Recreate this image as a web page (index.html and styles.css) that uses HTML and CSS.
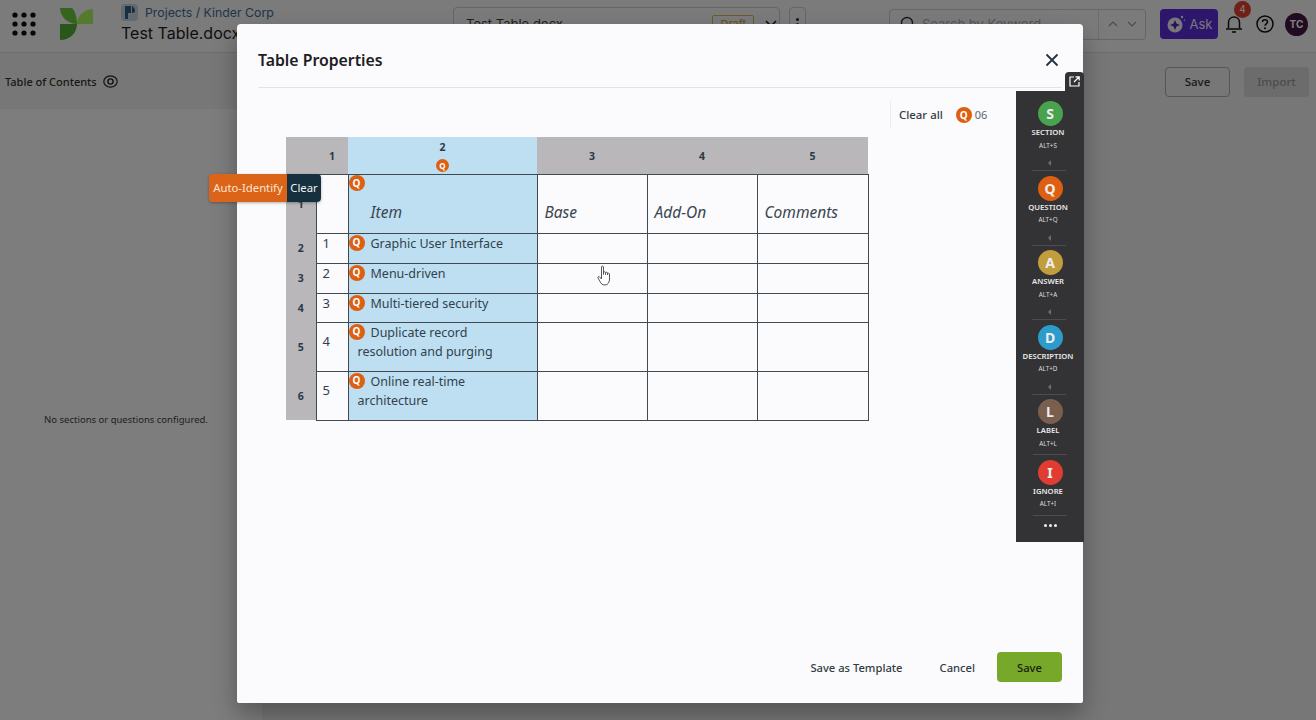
FILE: index.html
```html
<!DOCTYPE html>
<html lang="en">
<head>
<meta charset="utf-8">
<title>Table Properties</title>
<link rel="stylesheet" href="styles.css">
</head>
<body>
<div class="page">
  <header class="topbar">
    <svg class="apps" width="24" height="24" viewBox="0 0 24 24"><g fill="#0c0c0c"><circle cx="3" cy="3" r="2.6"/><circle cx="12" cy="3" r="2.6"/><circle cx="21" cy="3" r="2.6"/><circle cx="3" cy="12" r="2.6"/><circle cx="12" cy="12" r="2.6"/><circle cx="21" cy="12" r="2.6"/><circle cx="3" cy="21" r="2.6"/><circle cx="12" cy="21" r="2.6"/><circle cx="21" cy="21" r="2.6"/></g></svg>
    <svg class="logo" width="33" height="32" viewBox="0 0 33 32"><path d="M0 0H12C15 3 17 9 17 16C8 16 0 9 0 0Z" fill="#6cc83e"/><path d="M33 1V16H17C17 8 24 1 33 1Z" fill="#a8f55c"/><path d="M0 32V16H17C17 25 10 32 0 32Z" fill="#54ac38"/></svg>
    <div class="crumbs">
      <div class="crumb-line">
        <span class="pbadge"><svg width="10" height="13" viewBox="0 0 10 13"><path d="M0 0H6V7H3V13H0ZM7 0C9 1 10 3 10 5C10 6 9 7 7 7Z" fill="#2f5f87"/></svg></span>
        <span class="crumb-text">Projects / Kinder Corp</span>
      </div>
      <div class="doc-title">Test Table.docx</div>
    </div>
    <div class="doc-select">
      <span class="doc-select-name">Test Table.docx</span>
      <span class="draft">Draft</span>
      <svg width="12" height="8" viewBox="0 0 12 8"><path d="M1 1L6 6L11 1" fill="none" stroke="#222" stroke-width="1.6"/></svg>
    </div>
    <div class="kebab"><i></i><i></i><i></i></div>
    <div class="search">
      <svg width="16" height="16" viewBox="0 0 16 16"><circle cx="7" cy="7" r="5.5" fill="none" stroke="#333" stroke-width="1.4"/><path d="M11 11L15 15" stroke="#333" stroke-width="1.4"/></svg>
      <span class="search-text">Search by Keyword</span>
      <span class="search-nav">
        <svg width="10" height="6" viewBox="0 0 10 6"><path d="M1 5L5 1L9 5" fill="none" stroke="#999" stroke-width="1.2"/></svg>
        <svg width="10" height="6" viewBox="0 0 10 6"><path d="M1 1L5 5L9 1" fill="none" stroke="#999" stroke-width="1.2"/></svg>
      </span>
    </div>
    <div class="ask">
      <svg width="20" height="20" viewBox="0 0 20 20"><circle cx="9" cy="11" r="7.5" fill="#f0eef8"/><path d="M9 6L10.5 9.5L14 11L10.5 12.5L9 16L7.5 12.5L4 11L7.5 9.5Z" fill="#4a2bb8"/><circle cx="16" cy="3" r="1.2" fill="#f0eef8"/><circle cx="18.5" cy="6" r=".7" fill="#f0eef8"/></svg>
      <span>Ask</span>
    </div>
    <div class="bell">
      <svg width="18" height="20" viewBox="0 0 18 20"><path d="M3.5 14V8.5C3.5 5 6 3 9 3S14.500 5 14.500 8.500V14M1 15H17M7 18H11" fill="none" stroke="#111" stroke-width="1.500"/></svg>
      <span class="bell-count">4</span>
    </div>
    <svg class="help" width="18" height="18" viewBox="0 0 18 18"><circle cx="9" cy="9" r="8" fill="none" stroke="#111" stroke-width="1.500"/><path d="M6.500 7C6.500 5.500 7.700 4.800 9 4.800S11.500 5.600 11.500 7C11.500 8.800 9 8.800 9 10.800" fill="none" stroke="#111" stroke-width="1.500"/><circle cx="9" cy="13.300" r="1" fill="#111"/></svg>
    <div class="avatar">TC</div>
  </header>
  <div class="subbar">
    <div class="toc">
      <span>Table of Contents</span>
      <svg width="15" height="13" viewBox="0 0 15 13"><ellipse cx="7.500" cy="6.500" rx="6.700" ry="5.700" fill="none" stroke="#262626" stroke-width="1.200"/><circle cx="7.500" cy="6.500" r="2.600" fill="none" stroke="#262626" stroke-width="1.400"/></svg>
    </div>
    <div class="sub-actions">
      <span class="sub-save">Save</span>
      <span class="sub-import">Import</span>
    </div>
  </div>
  <main class="content">
    <aside class="side"><p class="empty">No sections or questions configured.</p></aside>
    <div class="main-pane"></div>
  </main>
</div>

<div class="scrim"></div>

<section class="modal">
  <div class="modal-head">
    <h2 class="modal-title">Table Properties</h2>
    <svg width="14" height="14" viewBox="0 0 14 14"><path d="M1.500 1.500L12.500 12.500M12.500 1.500L1.500 12.500" stroke="#26323c" stroke-width="1.800"/></svg>
  </div>
  <div class="modal-body">
    <div class="counter">
      <span class="clear-all">Clear all</span>
      <span class="q q-16">Q</span>
      <span class="count">06</span>
    </div>
    <table class="grid">
      <colgroup><col class="c0"><col class="c1"><col class="c2"><col class="c3"><col class="c4"><col class="c5"></colgroup>
      <thead>
        <tr class="r-head">
          <th class="hd corner"></th>
          <th class="hd"><span class="lower">1</span></th>
          <th class="hd sel"><span class="hd-num">2</span><span class="q q-13">Q</span></th>
          <th class="hd"><span class="lower">3</span></th>
          <th class="hd"><span class="lower">4</span></th>
          <th class="hd"><span class="lower">5</span></th>
        </tr>
      </thead>
      <tbody>
        <tr class="r1">
          <th class="rn">1</th>
          <td class="cell"></td>
          <td class="cell sel item"><span class="q q-16 cellq">Q</span><em>Item</em></td>
          <td class="cell it"><em>Base</em></td>
          <td class="cell it"><em>Add-On</em></td>
          <td class="cell it"><em>Comments</em></td>
        </tr>
        <tr class="r2">
          <th class="rn">2</th><td class="cell num">1</td>
          <td class="cell sel txt"><span class="q q-16 cellq">Q</span><span class="line1">Graphic User Interface</span></td>
          <td class="cell"></td><td class="cell"></td><td class="cell"></td>
        </tr>
        <tr class="r2">
          <th class="rn">3</th><td class="cell num">2</td>
          <td class="cell sel txt"><span class="q q-16 cellq">Q</span><span class="line1">Menu-driven</span></td>
          <td class="cell"></td><td class="cell"></td><td class="cell"></td>
        </tr>
        <tr class="r2b">
          <th class="rn">4</th><td class="cell num">3</td>
          <td class="cell sel txt"><span class="q q-16 cellq">Q</span><span class="line1">Multi-tiered security</span></td>
          <td class="cell"></td><td class="cell"></td><td class="cell"></td>
        </tr>
        <tr class="r3">
          <th class="rn">5</th><td class="cell num mid">4</td>
          <td class="cell sel txt"><span class="q q-16 cellq">Q</span><span class="line1">Duplicate record</span><br>resolution and purging</td>
          <td class="cell"></td><td class="cell"></td><td class="cell"></td>
        </tr>
        <tr class="r3">
          <th class="rn">6</th><td class="cell num mid">5</td>
          <td class="cell sel txt"><span class="q q-16 cellq">Q</span><span class="line1">Online real-time</span><br>architecture</td>
          <td class="cell"></td><td class="cell"></td><td class="cell"></td>
        </tr>
      </tbody>
    </table>
  </div>
  <div class="modal-foot">
    <span class="foot-link foot-template">Save as Template</span>
    <span class="foot-link foot-cancel">Cancel</span>
    <span class="foot-save">Save</span>
  </div>
</section>

<div class="auto-pop">
  <span class="auto">Auto-Identify</span>
  <span class="pop-clear">Clear</span>
</div>

<svg class="cursor" width="16" height="21" viewBox="0 0 16 21"><path d="M4.500 2C4.500 .8 6.500 .8 6.500 2V9.500V7.500C6.500 6.500 8.500 6.500 8.500 7.500V9.500V8C8.500 7 10.500 7 10.500 8V10V8.800C10.500 8 12.500 8 12.500 9V14C12.500 17 11 20 8 20C5 20 4 18.500 3 16.500L1 13C.5 12 1.500 11 2.500 11.800L4.500 14Z" fill="#fff" stroke="#555" stroke-width="1"/></svg>

<aside class="tools">
  <div class="tool"><span class="dot c-s">S</span><b>SECTION</b><small>ALT+S</small><i class="caret"></i></div>
  <div class="tool"><span class="dot c-q">Q</span><b>QUESTION</b><small>ALT+Q</small><i class="caret"></i></div>
  <div class="tool"><span class="dot c-a">A</span><b>ANSWER</b><small>ALT+A</small><i class="caret"></i></div>
  <div class="tool"><span class="dot c-d">D</span><b>DESCRIPTION</b><small>ALT+D</small><i class="caret"></i></div>
  <div class="tool tool-plain"><span class="dot c-l">L</span><b>LABEL</b><small>ALT+L</small></div>
  <div class="tool tool-plain"><span class="dot c-i">I</span><b>IGNORE</b><small>ALT+I</small></div>
  <div class="more"><i></i><i></i><i></i></div>
  <span class="popout"><svg width="11" height="11" viewBox="0 0 11 11"><path d="M5 1H1V10H10V6M6.500 .8H10.200V4.500M10 1L5 6" fill="none" stroke="#fff" stroke-width="1.200"/></svg></span>
</aside>
</body>
</html>
```
FILE: styles.css
```css
* { box-sizing: border-box; }
html, body { margin: 0; height: 720px; overflow: hidden; }
body { font-family: "Noto Sans", "Open Sans", sans-serif; background: #fff; color: #26323c; }

.page { width: 1316px; height: 720px; display: flex; flex-direction: column; background: #fff; }
.topbar { height: 53px; flex: none; display: flex; align-items: center; border-bottom: 1px solid #dcdcdc; padding: 0 0 4px 12px; background: #f6f6f6; font-family: Inter, sans-serif; }
.apps { flex: none; }
.logo { flex: none; margin: 0 0 0 24px; }
.crumbs { width: 332px; margin-left: 28px; align-self: flex-start; padding-top: 3px; flex: none; }
.crumb-line { display: flex; align-items: center; gap: 7px; height: 18px; }
.pbadge { width: 17px; height: 17px; background: #c5d4e0; border-radius: 4px; display: flex; align-items: center; justify-content: center; }
.crumb-text { font-size: 12.300px; color: #3f6a8f; }
.doc-title { font-size: 16px; line-height: 24px; color: #222; white-space: nowrap; }
.doc-select { width: 327px; height: 35px; border: 1px solid #ccc; border-radius: 4px; display: flex; align-items: center; padding: 0 2px 0 12px; font-size: 13px; color: #444; flex: none; }
.doc-select-name { flex: 1; }
.draft { border: 1px solid #d9b25e; border-radius: 2px; font-size: 11px; color: #c89b3c; padding: 1px 7px; margin-right: 11px; }
.kebab { width: 17px; height: 35px; margin: 0 0 0 9px; border: 1px solid #ccc; border-radius: 4px; display: flex; flex-direction: column; align-items: center; justify-content: center; gap: 2px; flex: none; }
.kebab i { width: 3px; height: 3px; border-radius: 50%; background: #222; }
.search { width: 257px; height: 31px; margin-left: 83px; border: 1px solid #ccc; border-radius: 4px; display: flex; align-items: center; padding-left: 10px; font-size: 13px; color: #aaa; flex: none; }
.search-text { flex: 1; margin-left: 6px; white-space: nowrap; }
.search-nav { width: 47px; height: 100%; border-left: 1px solid #ddd; display: flex; align-items: center; justify-content: center; gap: 9px; }
.ask { width: 58px; height: 30px; margin-left: 14px; background: #5a2ed8; border-radius: 4px; color: #efecfa; font-size: 13px; display: flex; align-items: center; justify-content: center; gap: 4px; flex: none; }
.bell { position: relative; width: 18px; height: 20px; margin-left: 7px; flex: none; }
.bell-count { position: absolute; left: 9px; top: -13px; width: 17px; height: 17px; border-radius: 50%; background: #e0402f; color: #fff; font-size: 10px; line-height: 17px; text-align: center; }
.help { margin-left: 13px; flex: none; }
.avatar { width: 23px; height: 23px; margin-left: 11px; border-radius: 50%; background: #421640; color: #fff; font-size: 10px; font-weight: 700; line-height: 23px; text-align: center; flex: none; }

.subbar { height: 56px; flex: none; display: flex; align-items: center; justify-content: space-between; padding: 1px 7px 0 5px; background: #eeeeee; }
.toc { display: flex; align-items: center; gap: 6px; font-size: 11px; font-weight: 500; color: #333; }
.sub-actions { display: flex; gap: 14px; font-size: 11.500px; font-weight: 500; }
.sub-save { width: 65px; height: 30px; border: 1px solid #aaa; border-radius: 4px; display: flex; align-items: center; justify-content: center; color: #333; }
.sub-import { width: 65px; height: 30px; background: #d8d8d8; border-radius: 4px; display: flex; align-items: center; justify-content: center; color: #999; }

.content { flex: 1; display: flex; }
.side { width: 262px; flex: none; background: #fafafa; display: flex; align-items: center; justify-content: center; padding-right: 10px; }
.empty { margin: 0 0 -9px; font-size: 9.500px; color: #444; }
.main-pane { flex: 1; background: #eeeeee; }

.scrim { position: absolute; inset: 0; background: rgba(0, 0, 0, .5); }

.modal { position: absolute; left: 237px; top: 24px; width: 846px; height: 679px; background: #fbfafc; border-radius: 4px 4px 2px 2px; box-shadow: 0 12px 24px rgba(0, 0, 0, .3); display: flex; flex-direction: column; padding: 0 21px 21px; }
.modal-head { height: 64px; flex: none; display: flex; align-items: center; justify-content: space-between; border-bottom: 1px solid #e3e3e5; padding: 8px 3px 0 0; }
.modal-title { margin: 0; font-size: 15.800px; font-weight: 600; color: #1c2024; line-height: 22px; }
.modal-body { flex: 1; min-height: 0; padding-left: 28px; }
.counter { height: 27px; margin: 13px 0 0 604px; width: 110px; display: flex; align-items: center; border-left: 1px solid #ececec; padding-left: 8px; font-size: 11.400px; font-weight: 500; white-space: nowrap; }
.clear-all { color: #333c44; margin-right: 13px; }
.count { color: #5e666d; font-size: 11px; margin-left: 3px; font-weight: 400; }

.q { display: inline-flex; align-items: center; justify-content: center; border-radius: 50%; background: #de5f11; color: #fff; font-weight: 700; font-style: normal; }
.q-16 { width: 16px; height: 16px; font-size: 10px; }
.q-13 { width: 13px; height: 13px; font-size: 8px; }

.grid { margin-top: 9px; border-collapse: collapse; table-layout: fixed; width: 582px; }
.c0 { width: 30px; } .c1 { width: 32px; } .c2 { width: 189px; } .c3 { width: 110px; } .c4 { width: 110px; } .c5 { width: 111px; }
.r-head { height: 37px; }
.r1 { height: 59px; }
.r2 { height: 30px; }
.r2b { height: 29px; }
.r3 { height: 49px; }
.hd { background: #b9b7ba; padding: 0; font-size: 10.500px; font-weight: 700; color: #2d3a45; text-align: center; vertical-align: middle; }
.lower { position: relative; top: 1px; }
.hd.sel { background: #bddff1; vertical-align: top; }
.hd-num { display: block; line-height: 12px; margin-top: 4px; }
.hd .q { display: flex; margin: 6px auto 0; }
.rn { background: #b9b7ba; padding: 0; font-size: 10.500px; font-weight: 700; color: #2d3a45; text-align: center; border: 0; }
.cell { border: 1px solid #3f4a52; padding: 0; font-size: 12.500px; color: #33414c; line-height: 20px; vertical-align: top; background: #fbfafc; }
.cell.sel { background: #bddff1; }
.item, .it { vertical-align: bottom; padding-bottom: 11px; font-size: 15.500px; }
.item { padding-left: 22px; position: relative; }
.it { padding-left: 7px; }
.item em, .it em { font-style: italic; color: #3a4650; }
.num { padding: 0 0 0 6px; line-height: 18px; font-size: 13px; }
.mid { padding-top: 9px; }
.txt { position: relative; padding: 0 4px 0 9px; line-height: 19px; }
.cellq { position: absolute; left: 0; top: 1px; }
.item .cellq { top: 0; }
.line1 { margin-left: 13px; }

.modal-foot { flex: none; height: 30px; display: flex; align-items: center; justify-content: flex-end; font-size: 11.200px; font-weight: 500; white-space: nowrap; }
.foot-link { color: #333c44; }
.foot-template { margin-right: 37px; }
.foot-cancel { margin-right: 22px; }
.foot-save { width: 65px; height: 30px; background: #78a82a; color: #16200c; border-radius: 4px; display: flex; align-items: center; justify-content: center; }

.auto-pop { position: absolute; left: 209px; top: 174px; height: 28px; display: flex; font-size: 11.300px; border-radius: 4px; box-shadow: 0 1px 3px rgba(0, 0, 0, .3); overflow: hidden; white-space: nowrap; }
.auto { width: 78px; background: #dc6418; color: #fbe4d4; display: flex; align-items: center; justify-content: center; padding-bottom: 2px; }
.pop-clear { width: 34px; background: #17303f; color: #eef2f4; display: flex; align-items: center; justify-content: center; padding-bottom: 2px; }

.cursor { position: absolute; left: 597px; top: 265px; }

.tools { position: absolute; left: 1016px; top: 91px; width: 68px; height: 451px; background: #333335; color: #e8e8e8; display: flex; flex-direction: column; align-items: center; padding-top: 10px; }
.tool { width: 100%; height: 74.500px; display: flex; flex-direction: column; align-items: center; position: relative; white-space: nowrap; }
.tool-plain { height: 60.500px; }
.tool b { font-size: 7.700px; font-weight: 600; line-height: 10px; margin: 1px 4px 0 0; }
.tool small { font-size: 6.300px; line-height: 8px; margin: 4.500px 4px 0 0; color: #ddd; }
.dot { width: 25px; height: 25px; border-radius: 50%; display: flex; align-items: center; justify-content: center; font-size: 14px; font-weight: 700; color: #eee; flex: none; }
.c-s { background: #49a24d; }
.c-q { background: #de5f11; }
.c-a { background: #c19d3e; }
.c-d { background: #2d9ccd; }
.c-l { background: #7a5f4f; }
.c-i { background: #df3d31; }
.caret { position: absolute; top: 59px; left: 32px; border: 3px solid transparent; border-right-color: #6d6d6d; border-left-width: 0; }
.caret::after { content: ""; position: absolute; top: 7px; left: -16px; width: 34px; height: 1px; background: #4d4d4f; }
.tool-plain::after { content: ""; position: absolute; top: 55px; left: 17px; width: 34px; height: 1px; background: #4d4d4f; }
.more { display: flex; gap: 2px; margin-top: 4px; }
.more i { width: 3px; height: 3px; border-radius: 50%; background: #eee; }
.popout { position: absolute; top: -19px; right: 0; width: 19px; height: 19px; background: #333335; border-radius: 4px 4px 0 0; display: flex; align-items: center; justify-content: center; }
```
